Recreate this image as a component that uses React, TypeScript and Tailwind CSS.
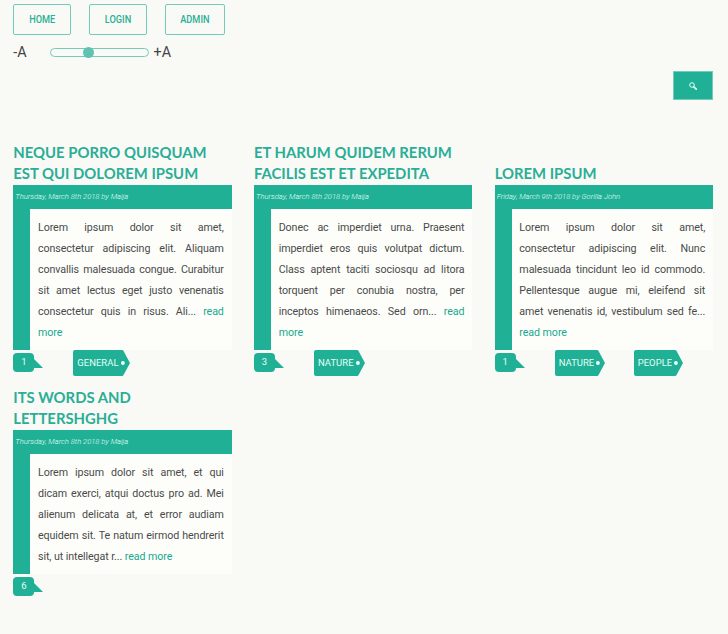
interface Post {
  title: string[];
  meta: string;
  body: string;
  comments: number;
  tags: string[];
}

const posts: Post[] = [
  {
    title: ['Neque porro quisquam', 'est qui dolorem ipsum'],
    meta: 'Thursday, March 8th 2018 by Maija',
    body: 'Lorem ipsum dolor sit amet, consectetur adipiscing elit. Aliquam convallis malesuada congue. Curabitur sit amet lectus eget justo venenatis consectetur quis in risus. Ali...',
    comments: 1,
    tags: ['General'],
  },
  {
    title: ['Et harum quidem rerum', 'facilis est et expedita'],
    meta: 'Thursday, March 8th 2018 by Maija',
    body: 'Donec ac imperdiet urna. Praesent imperdiet eros quis volutpat dictum. Class aptent taciti sociosqu ad litora torquent per conubia nostra, per inceptos himenaeos. Sed orn...',
    comments: 3,
    tags: ['Nature'],
  },
  {
    title: ['Lorem ipsum'],
    meta: 'Friday, March 9th 2018 by Gorilla John',
    body: 'Lorem ipsum dolor sit amet, consectetur adipiscing elit. Nunc malesuada tincidunt leo id commodo. Pellentesque augue mi, eleifend sit amet venenatis id, vestibulum sed fe...',
    comments: 1,
    tags: ['Nature', 'People'],
  },
  {
    title: ['Its words and', 'lettershghg'],
    meta: 'Thursday, March 8th 2018 by Maija',
    body: 'Lorem ipsum dolor sit amet, et qui dicam exerci, atqui doctus pro ad. Mei alienum delicata at, et error audiam equidem sit. Te natum eirmod hendrerit sit, ut intellegat r...',
    comments: 6,
    tags: [],
  },
];

function Tag({ label }: { label: string }) {
  return (
    <div className="flex h-[26px]">
      <span className="flex items-center whitespace-nowrap rounded-l-[2px] bg-[#20b095] pl-1 text-[9.5px] uppercase text-[#e4fff8]">
        {label}
      </span>
      <svg className="h-[26px] w-[11px]" viewBox="0 0 11 26">
        <path d="M0 0H3.2Q4 0 4.4 0.8L11 13L4.4 25.2Q4 26 3.2 26H0Z" fill="#20b095" />
        <circle cx="3.9" cy="13" r="1.9" fill="#f0fffb" />
      </svg>
    </div>
  );
}

function PostCard({ post }: { post: Post }) {
  return (
    <article className="flex flex-col justify-end">
      <h2 className="whitespace-nowrap font-[Lato,sans-serif] text-[14.85px] font-bold uppercase leading-[21px] text-[#2aae96]">
        {post.title.map((line) => (
          <span key={line} className="block origin-center scale-y-[1.08]">{line}</span>
        ))}
      </h2>
      <div className="mt-px flex h-6 items-center bg-[#20b095] pl-[2px] text-[7.6px] font-light italic text-[#e4fff8]">
        {post.meta}
      </div>
      <p className="border-l-[17px] border-[#20b095] bg-[#fdfefa] py-[7.5px] pl-[7.7px] pr-2 text-justify text-[10.7px] leading-[21px] tracking-[-0.09px] text-[#4a4a4a]">
        {post.body} <a className="text-[#20a88f]">read more</a>
      </p>
      <div className="flex h-[27px] items-start">
        <div className="mt-[3px] flex w-[60px]">
          <span className="flex h-[19px] w-[21px] items-center justify-center rounded-[4px] bg-[#20b095] text-[9.5px] text-[#e4fff8]">
            {post.comments}
          </span>
          <svg className="-ml-px mt-[5px] h-[10px] w-[10px]" viewBox="0 0 10 10">
            <path d="M0 0L10 10H0Z" fill="#20b095" />
          </svg>
        </div>
        <div className="flex gap-[28.5px]">
          {post.tags.map((tag) => (
            <Tag key={tag} label={tag} />
          ))}
        </div>
      </div>
    </article>
  );
}

export default function App() {
  return (
    <div className="h-[634px] w-[728px] overflow-hidden bg-[#f9faf6] pl-[13.3px] pr-[15px] pt-[4px] font-[Roboto,sans-serif]">
      <nav className="flex gap-[18px]">
        {['Home', 'Login', 'Admin'].map((item) => (
          <button
            key={item}
            className={`${item === 'Admin' ? 'w-[60px]' : 'w-[57.8px]'} h-[31px] rounded-[2px] border border-[#74cbbb] text-[9.2px] font-medium uppercase text-[#2aae96]`}
          >
            <span className="block scale-y-[1.12]">{item}</span>
          </button>
        ))}
      </nav>
      <div className="mt-[7.5px] flex h-5 items-center text-[14.4px] text-[#444]">
        <span className="w-[36.7px]">-A</span>
        <div className="flex h-[9px] w-[99px] items-center rounded-full border border-[#74cbbb] pl-8">
          <span className="h-[11px] w-[11px] shrink-0 rounded-full bg-[#60c3b1]" />
        </div>
        <span className="ml-[4.5px]">+A</span>
      </div>
      <div className="mt-[8.5px] flex justify-end">
        <button className="flex h-[29px] w-10 items-center justify-center border border-[#74cbbb] bg-[#20b095]">
          <svg className="h-2 w-2" viewBox="0 0 8 8" fill="none" stroke="#d8fff5">
            <circle cx="3" cy="3" r="2.3" strokeWidth="1" />
            <path d="M4.8 4.8L7.2 7.2" strokeWidth="1.8" strokeLinecap="round" />
          </svg>
        </button>
      </div>
      <main className="mt-[42px] grid grid-cols-[218.5px_218.5px_218.5px] gap-x-[22.2px] gap-y-[10px]">
        {posts.map((post) => (
          <PostCard key={post.title[0]} post={post} />
        ))}
      </main>
    </div>
  );
}
